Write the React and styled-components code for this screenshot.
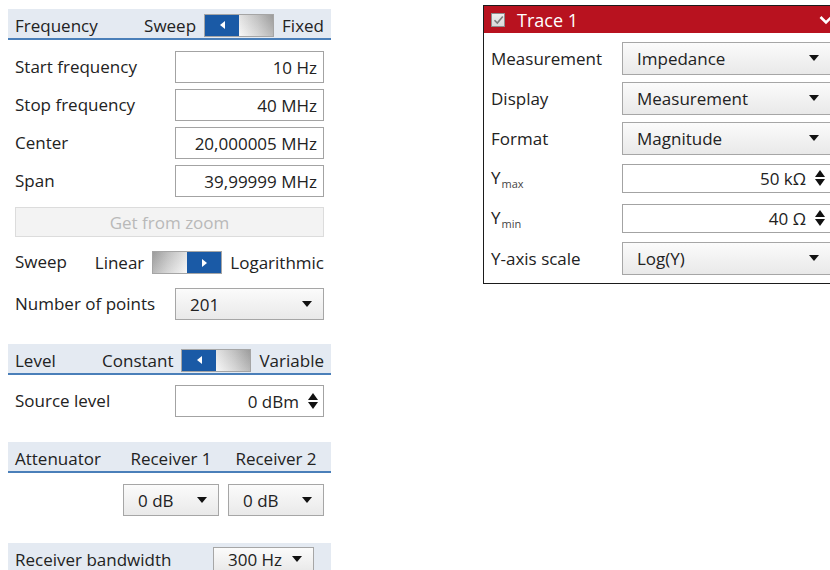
import React from 'react';
import styled, { createGlobalStyle } from 'styled-components';

const Global = createGlobalStyle`
  html, body { margin: 0; padding: 0; background: #fff; overflow: hidden; }
  body { font-family: "Open Sans", "Noto Sans", sans-serif; font-size: 17px; color: #222; }
  * { box-sizing: border-box; }
`;

const Page = styled.div`
  display: flex;
  align-items: flex-start;
  width: 830px;
  height: 570px;
  overflow: hidden;
`;

/* ---------- settings column ---------- */

const Settings = styled.div`
  margin: 9px 0 0 8px;
  width: 323px;
  flex-shrink: 0;
  display: flex;
  flex-direction: column;
`;

const SectionHeader = styled.div`
  height: 31px;
  margin-top: ${p => p.$mt || 0}px;
  padding: 3px ${p => p.$pr ?? 7}px 0 7px;
  background: #e4eaf2;
  border-bottom: 2px solid #4a7fb9;
  display: flex;
  align-items: center;
  gap: 8px;
  white-space: nowrap;
`;

const HeaderTitle = styled.span`
  flex: 1;
`;

const Row = styled.div`
  display: flex;
  align-items: center;
  justify-content: space-between;
  gap: 8px;
  padding: 0 7px;
  margin-top: ${p => p.$mt || 0}px;
  white-space: nowrap;
`;

const Label = styled.span`
  flex: 1;
  position: relative;
  top: -1px;
`;

const ValueBox = styled.div`
  width: ${p => p.$w || 149}px;
  height: ${p => p.$h || 32}px;
  border: 1px solid #a3a3a3;
  background: #fff;
  display: flex;
  align-items: center;
  justify-content: flex-end;
  gap: 9px;
  padding: 0 ${p => (p.$spin ? 5 : 6)}px 0 8px;
  flex-shrink: 0;
`;

const Select = styled.div`
  width: ${p => p.$w || 149}px;
  height: ${p => p.$h || 32}px;
  border: 1px solid #a6a6a6;
  background: linear-gradient(to bottom, #fbfbfb, #e9e9e9);
  display: flex;
  align-items: center;
  justify-content: space-between;
  padding: 0 11px 0 14px;
  flex-shrink: 0;
`;

const WideButton = styled.div`
  margin: 10px 7px 0 7px;
  height: 30px;
  border: 1px solid #dcdcdc;
  background: #f3f3f3;
  color: #b9b9b9;
  display: flex;
  align-items: center;
  justify-content: center;
`;

const Caret = styled.span`
  width: 0;
  height: 0;
  border-left: 5px solid transparent;
  border-right: 5px solid transparent;
  border-top: 6px solid #111;
  flex-shrink: 0;
`;

const SpinWrap = styled.span`
  display: flex;
  flex-direction: column;
  gap: 2px;
  flex-shrink: 0;
`;

const SpinUp = styled.span`
  width: 0;
  height: 0;
  border-left: 5px solid transparent;
  border-right: 5px solid transparent;
  border-bottom: 7px solid #111;
`;

const SpinDown = styled.span`
  width: 0;
  height: 0;
  border-left: 5px solid transparent;
  border-right: 5px solid transparent;
  border-top: 7px solid #111;
`;

const Spinner = () => (
  <SpinWrap>
    <SpinUp />
    <SpinDown />
  </SpinWrap>
);

const ToggleFrame = styled.div`
  width: 70px;
  height: 23px;
  flex-shrink: 0;
  display: flex;
  flex-direction: ${p => (p.$side === 'right' ? 'row-reverse' : 'row')};
  border: 1px solid #a5a5a5;
`;

const ToggleThumb = styled.div`
  flex: 1;
  background: #1a5aa6;
  display: flex;
  align-items: center;
  justify-content: center;
`;

const ToggleTrack = styled.div`
  flex: 1;
  background:
    linear-gradient(to bottom, rgba(0,0,0,0.08), rgba(255,255,255,0.2)),
    linear-gradient(${p => (p.$side === 'right' ? 'to left' : 'to right')}, #f6f6f6, #cfcfcf 55%, #a9a9a9);
`;

const Arrow = styled.span`
  width: 0;
  height: 0;
  border-top: 4px solid transparent;
  border-bottom: 4px solid transparent;
  ${p => (p.$dir === 'right' ? 'border-left: 5px solid #fff;' : 'border-right: 5px solid #fff;')}
`;

const Toggle = ({ side }) => (
  <ToggleFrame $side={side}>
    <ToggleThumb>
      <Arrow $dir={side} />
    </ToggleThumb>
    <ToggleTrack $side={side} />
  </ToggleFrame>
);

const AttenGrid = styled.div`
  display: grid;
  grid-template-columns: 1fr 96px 96px;
  column-gap: 9px;
  align-items: center;
  width: 100%;
`;

const Centered = styled.span`
  text-align: center;
`;

const AttenRow = styled.div`
  margin-top: 11px;
  padding: 0 7px;
  display: flex;
  justify-content: flex-end;
  gap: 9px;
`;

/* ---------- trace panel ---------- */

const TracePanel = styled.div`
  margin: 5px 0 0 152px;
  width: 356px;
  flex-shrink: 0;
  border: 1px solid #1b1b1b;
  background: #fff;
`;

const TraceHeader = styled.div`
  height: 27px;
  background: #b8121f;
  color: #fff;
  display: flex;
  align-items: center;
  padding: 0 5px 0 7px;
  font-size: 18px;
`;

const CheckBox = styled.span`
  width: 14px;
  height: 14px;
  border: 1px solid #8d8d8d;
  background: linear-gradient(to bottom, #ededed, #dadada);
  display: flex;
  align-items: center;
  justify-content: center;
  margin-right: 12px;
  flex-shrink: 0;
`;

const TraceTitle = styled.span`
  flex: 1;
`;

const TraceBody = styled.div`
  padding: 5px 7px 5px 7px;
  display: flex;
  flex-direction: column;
`;

const TraceRow = styled.div`
  height: 40px;
  display: grid;
  grid-template-columns: 131px 209px;
  align-items: center;
  white-space: nowrap;
`;

const Sub = styled.sub`
  font-size: 11px;
  vertical-align: -4px;
  margin-left: 1px;
  color: #444;
`;

const Check = () => (
  <svg width="11" height="10" viewBox="0 0 11 10">
    <path d="M1.5 5.2 L4.3 8 L9.8 1.5" fill="none" stroke="#7b7b7b" strokeWidth="1.6" />
  </svg>
);

const Chevron = () => (
  <svg width="14" height="10" viewBox="0 0 14 10">
    <path d="M1.5 2 L7 7.5 L12.5 2" fill="none" stroke="#fff" strokeWidth="2.6" />
  </svg>
);

const SelectField = ({ value, w, h }) => (
  <Select $w={w} $h={h}>
    <span>{value}</span>
    <Caret />
  </Select>
);

const NumberField = ({ value, w, h }) => (
  <ValueBox $w={w} $h={h} $spin>
    <span>{value}</span>
    <Spinner />
  </ValueBox>
);

export default function App() {
  return (
    <Page>
      <Global />
      <Settings>
        <SectionHeader>
          <HeaderTitle>Frequency</HeaderTitle>
          <span>Sweep</span>
          <Toggle side="left" />
          <span>Fixed</span>
        </SectionHeader>

        <Row $mt={11}>
          <Label>Start frequency</Label>
          <ValueBox>10 Hz</ValueBox>
        </Row>
        <Row $mt={6}>
          <Label>Stop frequency</Label>
          <ValueBox>40 MHz</ValueBox>
        </Row>
        <Row $mt={6}>
          <Label>Center</Label>
          <ValueBox>20,000005 MHz</ValueBox>
        </Row>
        <Row $mt={6}>
          <Label>Span</Label>
          <ValueBox>39,99999 MHz</ValueBox>
        </Row>

        <WideButton>Get from zoom</WideButton>

        <Row $mt={14}>
          <Label>Sweep</Label>
          <span>Linear</span>
          <Toggle side="right" />
          <span>Logarithmic</span>
        </Row>
        <Row $mt={14}>
          <Label>Number of points</Label>
          <SelectField value="201" />
        </Row>

        <SectionHeader $mt={24}>
          <HeaderTitle>Level</HeaderTitle>
          <span>Constant</span>
          <Toggle side="left" />
          <span>Variable</span>
        </SectionHeader>
        <Row $mt={10}>
          <Label>Source level</Label>
          <NumberField value="0 dBm" />
        </Row>

        <SectionHeader $mt={25}>
          <AttenGrid>
            <span>Attenuator</span>
            <Centered>Receiver 1</Centered>
            <Centered>Receiver 2</Centered>
          </AttenGrid>
        </SectionHeader>
        <AttenRow>
          <SelectField value="0 dB" w={96} />
          <SelectField value="0 dB" w={96} />
        </AttenRow>

        <SectionHeader $mt={27} $pr={17}>
          <HeaderTitle>Receiver bandwidth</HeaderTitle>
          <SelectField value="300 Hz" w={101} h={25} />
        </SectionHeader>
      </Settings>

      <TracePanel>
        <TraceHeader>
          <CheckBox>
            <Check />
          </CheckBox>
          <TraceTitle>Trace 1</TraceTitle>
          <Chevron />
        </TraceHeader>
        <TraceBody>
          <TraceRow>
            <span>Measurement</span>
            <SelectField value="Impedance" w={209} h={33} />
          </TraceRow>
          <TraceRow>
            <span>Display</span>
            <SelectField value="Measurement" w={209} h={33} />
          </TraceRow>
          <TraceRow>
            <span>Format</span>
            <SelectField value="Magnitude" w={209} h={33} />
          </TraceRow>
          <TraceRow>
            <span>
              Y<Sub>max</Sub>
            </span>
            <NumberField value="50 kΩ" w={209} h={29} />
          </TraceRow>
          <TraceRow>
            <span>
              Y<Sub>min</Sub>
            </span>
            <NumberField value="40 Ω" w={209} h={29} />
          </TraceRow>
          <TraceRow>
            <span>Y-axis scale</span>
            <SelectField value="Log(Y)" w={209} h={33} />
          </TraceRow>
        </TraceBody>
      </TracePanel>
    </Page>
  );
}
